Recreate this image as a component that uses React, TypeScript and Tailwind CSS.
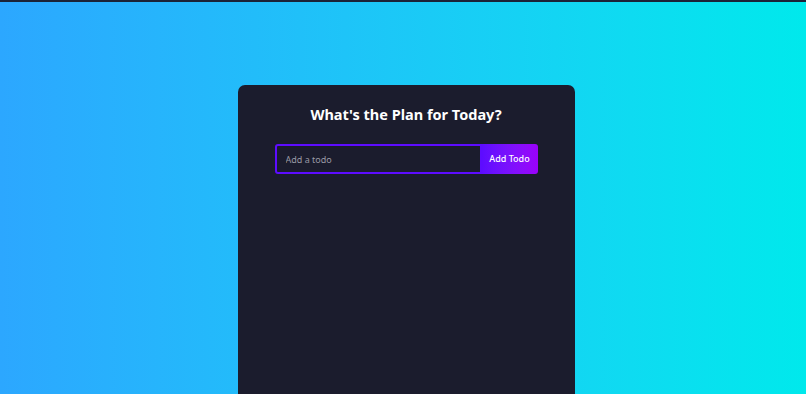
export default function App() {
  return (
    <div className="min-h-screen overflow-hidden bg-gradient-to-r from-[#2ca7ff] to-[#00e9ec] pl-[6px] font-['Noto_Sans',sans-serif]">
      <div className="-ml-[6px] h-[2px] bg-[#1b2338]" />
      <div className="mx-auto mt-[83px] flex min-h-[390px] w-[337px] flex-col items-center rounded-[7px] bg-[#1b1c2d] pb-5">
        <h1 className="mt-[17px] text-[14.5px] font-bold leading-[24px] text-white">
          What's the Plan for Today?
        </h1>
        <form className="mt-[18px] flex" onSubmit={(e) => e.preventDefault()}>
          <input
            type="text"
            placeholder="Add a todo"
            className="h-[30px] w-[207px] shrink-0 rounded-l-[3px] border-2 border-[#5d0cff] bg-transparent pl-[9px] text-[9px] text-white outline-none placeholder:text-[#9a9aa5]"
          />
          <button
            type="submit"
            className="h-[30px] w-[56px] shrink-0 rounded-r-[3px] bg-gradient-to-r from-[#5d0cff] to-[#9b00fa] text-[9px] font-medium text-white"
          >
            Add Todo
          </button>
        </form>
      </div>
    </div>
  );
}
